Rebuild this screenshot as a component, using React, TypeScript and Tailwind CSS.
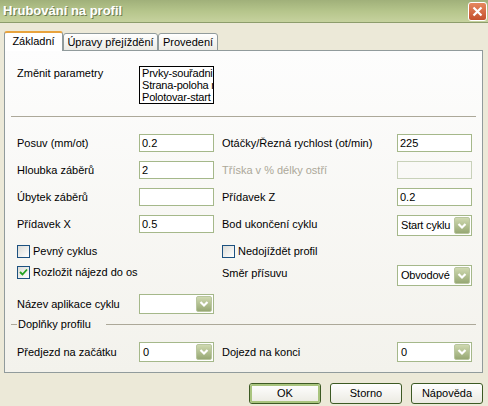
import React from 'react';

const Chevron = () => (
  <svg width="10" height="8" viewBox="0 0 10 8">
    <polyline points="1.5,2 5,5.5 8.5,2" fill="none" stroke="#ffffff" strokeWidth="2.2" />
  </svg>
);

const TextBox = ({ value = '', disabled = false }: { value?: string; disabled?: boolean }) => (
  <div
    className={
      disabled
        ? 'h-[18px] w-[75px] border border-[#c8d1b9] bg-transparent'
        : 'h-[18px] w-[75px] border border-[#a5b88a] bg-white pl-[2px] leading-[16px] text-black'
    }
  >
    {value}
  </div>
);

const Combo = ({ value = '', h = 'h-[21px]' }: { value?: string; h?: string }) => (
  <div className={`flex ${h} w-[75px] border border-[#a5b88a] bg-white p-[1px]`}>
    <div className="flex-1 overflow-hidden whitespace-nowrap pl-[2px] leading-[17px] tracking-[-0.2px] text-black">{value}</div>
    <div className="flex w-[16px] items-center justify-center rounded-[2px] border border-[#b9c69f] bg-gradient-to-b from-[#cfd9b0] to-[#97a874]">
      <Chevron />
    </div>
  </div>
);

const CheckBox = ({ checked = false }: { checked?: boolean }) => (
  <div className="flex h-[13px] w-[13px] items-center justify-center border border-[#1c5180] bg-gradient-to-br from-[#dcdcd7] to-white">
    {checked && (
      <svg width="9" height="9" viewBox="0 0 9 9">
        <polyline points="1,4 3.5,6.5 8,1.5" fill="none" stroke="#21a121" strokeWidth="1.8" />
      </svg>
    )}
  </div>
);

const Button = ({ label, def = false }: { label: string; def?: boolean }) => (
  <div className="h-[21px] w-[72px] rounded-[3px] border border-[#3d5a24] bg-gradient-to-b from-white to-[#ebeae2]">
    <div
      className={
        def
          ? 'flex h-full items-center justify-center rounded-[2px] border-2 border-[#a9c47e]'
          : 'flex h-full items-center justify-center'
      }
    >
      {label}
    </div>
  </div>
);

export default function App() {
  return (
    <div className="flex h-[406px] w-[488px] flex-col overflow-hidden bg-[#ece9d8] font-['Liberation_Sans',Arial,sans-serif] text-[11px] text-black">
      {/* Title bar */}
      <div className="flex h-[23px] items-center justify-between border-b border-[#8d9d6c] bg-gradient-to-b from-[#a0b07a] via-[#b5c58b] to-[#c6d29e] pl-[3px] pr-[1px]">
        <span className="text-[13px] font-bold text-white [text-shadow:1px_1px_0_#6f7d52]">Hrubování na profil</span>
        <div className="flex h-[19px] w-[19px] items-center justify-center rounded-[3px] border border-white bg-gradient-to-b from-[#e6885f] to-[#c4502c]">
          <svg width="11" height="11" viewBox="0 0 11 11">
            <path d="M1.5 1.5 L9.5 9.5 M9.5 1.5 L1.5 9.5" stroke="#ffffff" strokeWidth="2.2" />
          </svg>
        </div>
      </div>

      {/* Tabs */}
      <div className="relative z-10 ml-[4px] mt-[8px] flex h-[20px] items-end">
        <div className="flex h-[20px] w-[59px] items-center justify-center rounded-t-[3px] border-x border-t-2 border-x-[#919b9c] border-t-[#e8a33d] bg-white pb-[1px]">
          Základní
        </div>
        <div className="flex h-[18px] w-[95px] items-center justify-center rounded-t-[3px] border-x border-t border-b border-[#919b9c] bg-gradient-to-b from-white to-[#ecebe5]">
          Úpravy přejíždění
        </div>
        <div className="flex h-[18px] w-[60px] items-center justify-center rounded-t-[3px] border-x border-t border-b border-[#919b9c] bg-gradient-to-b from-white to-[#ecebe5]">
          Provedení
        </div>
      </div>

      {/* Panel */}
      <div className="-mt-px ml-[4px] flex h-[323px] w-[479px] flex-col border border-[#919b9c] bg-gradient-to-b from-[#fdfdfd] to-[#f3f2ec] pl-[12px]">
        <div className="mt-[15px] flex h-[38px]">
          <div className="w-[122px] pt-[1px] leading-[13px]">Změnit parametry</div>
          <div className="h-[38px] w-[75px] overflow-hidden whitespace-nowrap border border-black bg-white pl-[2px] leading-[12px] tracking-[-0.2px]">
            <div>Prvky-souřadni</div>
            <div>Strana-poloha r</div>
            <div>Polotovar-start</div>
          </div>
        </div>

        <div className="ml-[-6px] mr-[6px] mt-[12px] h-px bg-[#aca899]" />

        <div className="mt-[17px] flex h-[18px] items-center">
          <div className="w-[122px]">Posuv (mm/ot)</div>
          <TextBox value="0.2" />
          <div className="ml-[8px] w-[175px]">Otáčky/Řezná rychlost (ot/min)</div>
          <TextBox value="225" />
        </div>

        <div className="mt-[9px] flex h-[18px] items-center">
          <div className="w-[122px]">Hloubka záběrů</div>
          <TextBox value="2" />
          <div className="ml-[8px] w-[175px] text-[#aca899]">Tříska v % délky ostří</div>
          <TextBox disabled />
        </div>

        <div className="mt-[9px] flex h-[18px] items-center">
          <div className="w-[122px]">Úbytek záběrů</div>
          <TextBox />
          <div className="ml-[8px] w-[175px]">Přídavek Z</div>
          <TextBox value="0.2" />
        </div>

        <div className="mt-[9px] flex h-[21px] items-start">
          <div className="w-[122px] leading-[18px]">Přídavek X</div>
          <TextBox value="0.5" />
          <div className="ml-[8px] w-[175px] leading-[18px]">Bod ukončení cyklu</div>
          <Combo value="Start cyklu" />
        </div>

        <div className="mt-[9px] flex h-[13px] items-center">
          <div className="flex w-[205px] items-center gap-[3px]">
            <CheckBox />
            <span>Pevný cyklus</span>
          </div>
          <div className="flex items-center gap-[3px]">
            <CheckBox />
            <span>Nedojíždět profil</span>
          </div>
        </div>

        <div className="mt-[7px] flex h-[21px] items-start">
          <div className="flex h-[14px] w-[205px] items-center gap-[3px]">
            <CheckBox checked />
            <span>Rozložit nájezd do os</span>
          </div>
          <div className="w-[175px] leading-[16px]">Směr přísuvu</div>
          <Combo value="Obvodové" />
        </div>

        <div className="mt-[8px] flex h-[20px] items-center">
          <div className="w-[122px]">Název aplikace cyklu</div>
          <Combo h="h-[20px]" />
        </div>

        <div className="ml-[-6px] mr-[6px] mt-[4px] flex h-[13px] items-center">
          <div className="h-px w-[6px] bg-[#aca899]" />
          <span className="px-[1px] leading-[13px]">Doplňky profilu</span>
          <div className="ml-[14px] h-px flex-1 bg-[#aca899]" />
        </div>

        <div className="mt-[11px] flex h-[20px] items-center">
          <div className="w-[122px]">Předjezd na začátku</div>
          <Combo value="0" h="h-[20px]" />
          <div className="ml-[8px] w-[175px]">Dojezd na konci</div>
          <Combo value="0" h="h-[20px]" />
        </div>
      </div>

      {/* Buttons */}
      <div className="mr-[5px] mt-[10px] flex justify-end gap-[9px]">
        <Button label="OK" def />
        <Button label="Storno" />
        <Button label="Nápověda" />
      </div>
    </div>
  );
}
